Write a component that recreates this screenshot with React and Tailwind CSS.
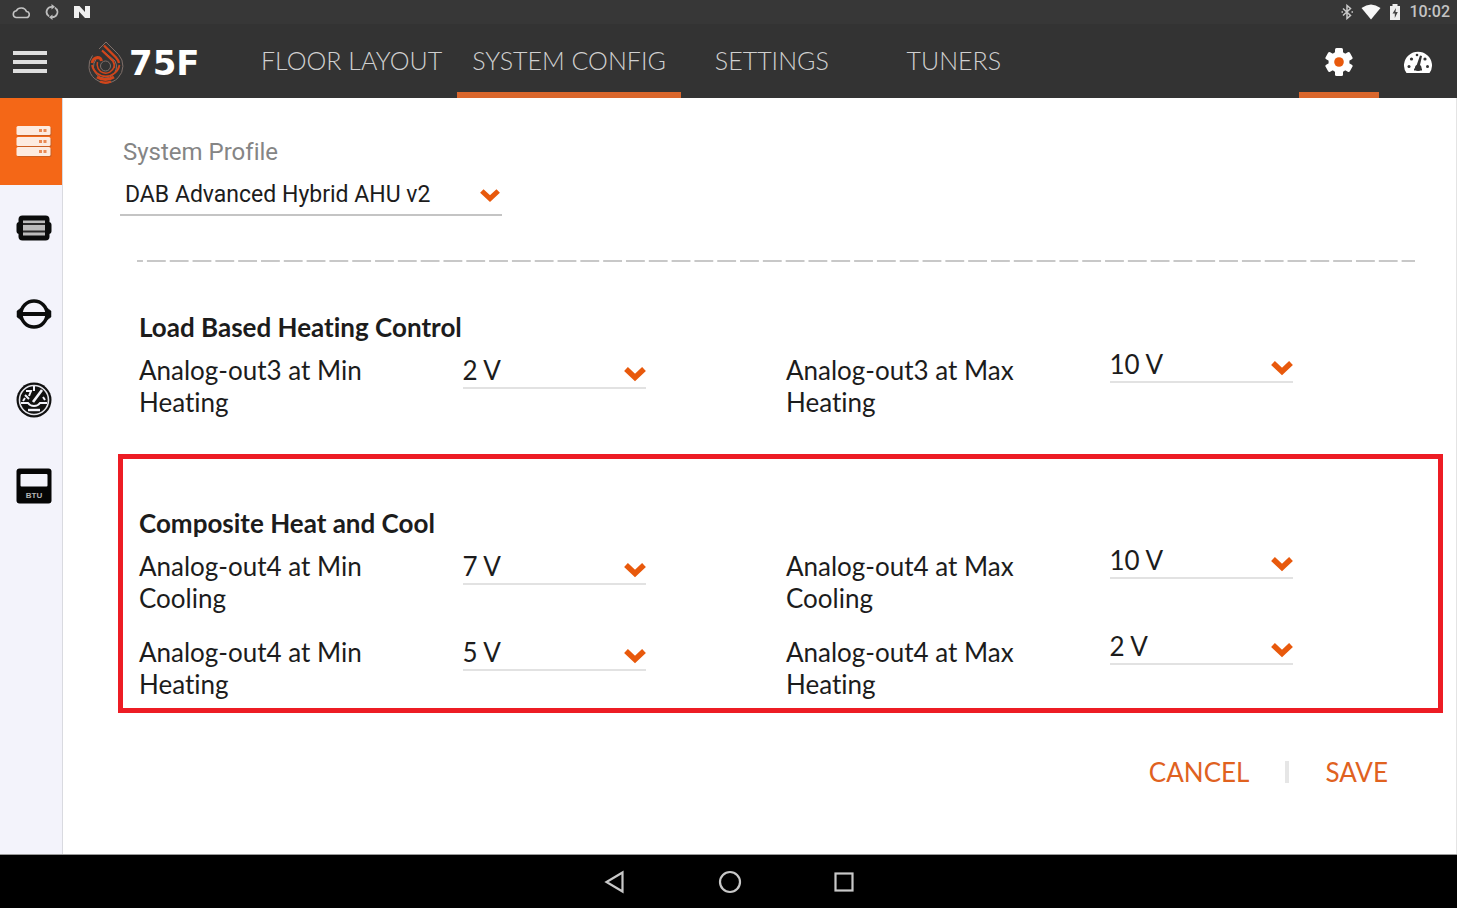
import React, { useState } from 'react';

const ORANGE = '#e8590c';

const tabs = ['FLOOR LAYOUT', 'SYSTEM CONFIG', 'SETTINGS', 'TUNERS'];

const profiles = ['DAB Advanced Hybrid AHU v2', 'DAB Staged RTU', 'VVT-C Staged RTU'];

const volts = ['0 V', '1 V', '2 V', '3 V', '4 V', '5 V', '6 V', '7 V', '8 V', '9 V', '10 V'];

const heatingRows = [
  [
    { id: 'ao3-min-heat', label: 'Analog-out3 at Min Heating', value: '2 V' },
    { id: 'ao3-max-heat', label: 'Analog-out3 at Max Heating', value: '10 V' },
  ],
];

const compositeRows = [
  [
    { id: 'ao4-min-cool', label: 'Analog-out4 at Min Cooling', value: '7 V' },
    { id: 'ao4-max-cool', label: 'Analog-out4 at Max Cooling', value: '10 V' },
  ],
  [
    { id: 'ao4-min-heat', label: 'Analog-out4 at Min Heating', value: '5 V' },
    { id: 'ao4-max-heat', label: 'Analog-out4 at Max Heating', value: '2 V' },
  ],
];

/* ---------- icons ---------- */

const Chevron = ({ className }) => (
  <svg viewBox="0 0 22 16" className={`absolute pointer-events-none ${className}`} fill="none" stroke={ORANGE} strokeWidth="5.500">
    <path d="M2 3 L11 11.500 L20 3" />
  </svg>
);

const DropLogo = () => (
  <svg viewBox="0 0 36 44" className="w-9 h-11" fill="none">
    <g stroke="#80706a" strokeWidth="1">
      <path d="M11 8 L18 1 L30.500 13.500 A17 17 0 1 1 4.500 14.500" />
      <path d="M14 9 L27 20 A11.500 11.500 0 1 1 8 18.500" />
      <circle cx="17.500" cy="25" r="5" />
    </g>
    <g stroke="#d2451a">
      <path d="M16 4.500 L28 16.500 A14 14 0 0 1 31 22" strokeWidth="2.400" />
      <path d="M14 9.500 L25 20 A9 9 0 0 1 26 27" strokeWidth="2" />
      <path d="M4 22 Q5 17 9.500 16.500 Q13 16.500 13.500 20" strokeWidth="2.800" />
      <path d="M4 24 A14 14 0 0 0 31.500 24" strokeWidth="1.800" />
      <path d="M9.500 21 A8.500 8.500 0 0 0 26 26" strokeWidth="1.500" />
      <path d="M9 36 Q17.500 41 26 36" strokeWidth="3" />
      <path d="M12 40.500 Q17.500 43 23 40.500" strokeWidth="2.400" />
    </g>
  </svg>
);

const GearIcon = () => (
  <svg viewBox="0 0 28 28" className="w-7 h-7">
    <g fill="#ffffff">
      <circle cx="14" cy="14" r="10.500" />
      {[0, 60, 120].map((deg) => (
        <rect key={deg} x="10" y="0" width="8" height="28" rx="1.500" transform={`rotate(${deg} 14 14)`} />
      ))}
    </g>
    <circle cx="14" cy="14" r="4.800" fill={ORANGE} />
  </svg>
);

const GaugeIcon = () => (
  <svg viewBox="0 0 28 24" className="w-7 h-6">
    <path d="M2.500 23 A14 13.500 0 1 1 25.500 23 Z" fill="#ffffff" />
    <g fill="#333333">
      <circle cx="5" cy="16.500" r="1.500" />
      <circle cx="7.500" cy="9" r="1.600" />
      <circle cx="13" cy="5" r="1.300" />
      <circle cx="21" cy="9" r="1.600" />
      <circle cx="23.500" cy="16.500" r="1.500" />
      <path d="M16 5.500 L18 6 L16 15 A3.300 3.300 0 1 1 12.800 14.800 Z" />
      <rect x="10" y="18.500" width="8" height="2" />
    </g>
  </svg>
);

const ServerIcon = () => (
  <svg viewBox="0 0 36 32" className="w-9 h-8">
    {[0, 11, 21].map((y) => (
      <g key={y}>
        <rect x="1.500" y={y + 1} width="34" height="9" rx="1.500" fill="#b05a2a" opacity="0.6" />
        <rect x="0.500" y={y} width="34" height="9" rx="1.500" fill="#fdebe0" />
        <rect x="23" y={y + 3} width="3" height="3" fill="#e98a55" />
        <rect x="27.500" y={y + 3} width="3" height="3" fill="#e98a55" />
      </g>
    ))}
  </svg>
);

const VentIcon = () => (
  <svg viewBox="0 0 36 26" className="w-9 h-[26px]">
    <rect x="0.500" y="7" width="35" height="12" rx="3" fill="#0b0c0c" />
    <rect x="2.500" y="0.500" width="31" height="25" rx="4" fill="#0b0c0c" />
    <rect x="7" y="5.500" width="22" height="15" fill="#bcbcbc" />
    <path d="M7 9 H29 M7 16.500 H29" stroke="#2a2a2a" strokeWidth="1.800" />
  </svg>
);

const DamperIcon = () => (
  <svg viewBox="0 0 36 30" className="w-9 h-[30px]" fill="none" stroke="#0b0c0c">
    <circle cx="18" cy="15" r="13" strokeWidth="3.400" />
    <path d="M2 15 H34" strokeWidth="4" />
    <path d="M1 12 L5 9 V21 L1 18 Z M35 12 L31 9 V21 L35 18 Z" fill="#0b0c0c" strokeWidth="0.500" />
  </svg>
);

const MeterIcon = () => (
  <svg viewBox="0 0 36 36" className="w-9 h-9" fill="none">
    <circle cx="18" cy="18" r="17.500" fill="#111111" />
    <circle cx="18" cy="18" r="14.500" stroke="#e4e4ea" strokeWidth="1.600" />
    <g stroke="#f3f3fb" strokeWidth="2">
      <path d="M5 21 H12 Q14 24 18 24 Q22 24 24 21 H31" />
      <path d="M17 20 L26 8" strokeWidth="2.600" />
      <path d="M18 4 V9 M9 13 L13 17 M7 19 L9 16 M27 15 L29 18 M10 9 L15 9 L13 14" />
      <path d="M12 28 H24" strokeWidth="2.400" />
    </g>
  </svg>
);

const BtuIcon = () => (
  <svg viewBox="0 0 36 36" className="w-9 h-9">
    <rect x="0.500" y="0.500" width="35" height="35" rx="3" fill="#050505" />
    <rect x="4.500" y="6" width="27" height="12.500" rx="1" fill="#f3f3fb" />
    <text x="18" y="30" textAnchor="middle" fontFamily="Liberation Sans, sans-serif" fontSize="8" fontWeight="bold" fill="#b5b5b5">
      BTU
    </text>
  </svg>
);

const modules = [
  { name: 'System', icon: ServerIcon },
  { name: 'Vent', icon: VentIcon },
  { name: 'Damper', icon: DamperIcon },
  { name: 'Meter', icon: MeterIcon },
  { name: 'BTU meter', icon: BtuIcon },
];

/* ---------- pieces ---------- */

function StatusBar() {
  return (
    <div className="flex-none h-6 bg-[#373737] flex items-center justify-between pl-3 pr-[7px]">
      <div className="flex items-center gap-[14px]">
        <svg viewBox="0 0 18 14" className="w-[18px] h-[14px]" fill="none" stroke="#c4c4c4" strokeWidth="1.600">
          <path d="M4 12.500 H14 A3 3 0 0 0 14.500 6.500 A5.500 5 0 0 0 4.300 5.800 A3.400 3.400 0 0 0 4 12.500 Z" />
        </svg>
        <svg viewBox="0 0 16 16" className="w-4 h-4" stroke="#bdbdbd" strokeWidth="1.700" fill="none">
          <path d="M8 2.800 A5.200 5.200 0 0 0 3.500 11 M8 13.200 A5.200 5.200 0 0 0 12.500 5" />
          <path d="M7.500 0 L11 2.800 L7.500 5.600 Z M8.500 10.400 L5 13.200 L8.500 16 Z" fill="#bdbdbd" stroke="none" />
          <path d="M11 3.500 L13 6 M5 12.500 L3 10" />
        </svg>
        <svg viewBox="0 0 16 14" className="w-4 h-[14px]" fill="#f0f0f0">
          <path d="M0 1 H5.500 L11 7 V1 H16 V13 H11 L5 6.500 V13 H0 Z" />
        </svg>
      </div>
      <div className="flex items-center gap-2">
        <svg viewBox="0 0 12 16" className="w-3 h-4" fill="none" stroke="#c9c9c9" strokeWidth="1.500">
          <path d="M2 4.500 L9.500 11.500 L6 14.500 V1.500 L9.500 4.500 L2 11.500 M0.500 8 H2 M10.500 8 H12" />
        </svg>
        <svg viewBox="0 0 20 16" className="w-5 h-4" fill="#f7f7f7">
          <path d="M0.500 4 Q10 -3 19.500 4 L10 15.500 Z" />
        </svg>
        <svg viewBox="0 0 12 18" className="w-3 h-[18px]">
          <path d="M1 3 H3.500 V1 H8.500 V3 H11 V17 H1 Z" fill="#eeeeee" />
          <path d="M7 5 L3.500 10.500 H5.800 V15 L8.800 9 H6.500 Z" fill="#444444" />
        </svg>
        <span className="font-[Roboto,sans-serif] text-base font-medium text-[#c4c4c4]">10:02</span>
      </div>
    </div>
  );
}

function Header({ activeTab, onChange }) {
  return (
    <header className="flex-none h-[74px] bg-[#333333] flex items-stretch">
      <button aria-label="Menu" className="flex flex-col justify-center gap-[5px] pt-0.5 pl-[13px] pr-10">
        <span className="w-[34px] h-[4px] bg-[#dedede]" />
        <span className="w-[34px] h-[4px] bg-[#dedede]" />
        <span className="w-[34px] h-[4px] bg-[#dedede]" />
      </button>
      <a href="#home" className="w-[159px] pt-1 pl-px flex items-center gap-[5px]">
        <DropLogo />
        <span className="font-['DejaVu_Sans',sans-serif] text-[34px] font-bold leading-9 text-white">75F</span>
      </a>

      <nav className="flex">
        {tabs.map((tab) => (
          <button
            key={tab}
            onClick={() => onChange(tab)}
            className={`min-w-[182px] px-[15px] pt-1.5 border-b-[6px] text-[25px] font-light whitespace-nowrap text-[#d0d0d0] ${
              activeTab === tab ? 'border-[#d9662c]' : 'border-transparent'
            }`}
          >
            {tab}
          </button>
        ))}
      </nav>

      <div className="ml-auto flex">
        <button aria-label="Configuration" className="w-20 pt-2 flex items-center justify-center border-b-[6px] border-[#d9662c]">
          <GearIcon />
        </button>
        <button aria-label="Dashboard" className="w-[78px] pt-2 flex items-center justify-center border-b-[6px] border-transparent">
          <GaugeIcon />
        </button>
      </div>
    </header>
  );
}

function Sidebar() {
  return (
    <aside className="flex-none w-[63px] bg-[#f3f3fb] border-r border-[#d9dae0]">
      {modules.map((item, i) => (
        <button
          key={item.name}
          aria-label={item.name}
          className={`w-full pl-[6px] flex items-center justify-center ${i === 0 ? 'h-[87px] bg-[#f46717]' : 'h-[86px]'}`}
        >
          <item.icon />
        </button>
      ))}
    </aside>
  );
}

function VoltField({ field, selectOffset }) {
  const [value, setValue] = useState(field.value);

  return (
    <>
      <label htmlFor={field.id} className="mt-1.5 pr-14 leading-8">{field.label}</label>
      <div className={`relative w-full max-w-[183px] ${selectOffset}`}>
        <select
          id={field.id}
          value={value}
          onChange={(e) => setValue(e.target.value)}
          className="block w-full h-[35px] pb-1 appearance-none bg-transparent border-b-2 border-[#e2e2e2] leading-8 outline-none"
        >
          {volts.map((v) => <option key={v}>{v}</option>)}
        </select>
        <Chevron className="right-0 top-3 w-[22px] h-4" />
      </div>
    </>
  );
}

function Section({ title, rows, className }) {
  return (
    <section className={`border-[5px] pl-4 pr-[5px] pb-2 ${className}`}>
      <h2 className="font-bold leading-8 mb-[5px]">{title}</h2>
      <div className="grid grid-cols-4 gap-y-4 items-start">
        {rows.map(([min, max]) => (
          <React.Fragment key={min.id}>
            <VoltField field={min} selectOffset="mt-1.5" />
            <VoltField field={max} selectOffset="mt-0" />
          </React.Fragment>
        ))}
      </div>
    </section>
  );
}

function App() {
  const [activeTab, setActiveTab] = useState('SYSTEM CONFIG');
  const [profile, setProfile] = useState(profiles[0]);

  return (
    <div className="min-h-screen bg-white pr-[5px] pb-[14px] flex flex-col font-[Lato,sans-serif] [font-variant-ligatures:no-common-ligatures]">
      <StatusBar />
      <Header activeTab={activeTab} onChange={setActiveTab} />

      <div className="flex-1 flex border-b border-[#9a9a9a]">
        <Sidebar />

        <main className="flex-1 min-w-0 pt-10 pl-[55px] pr-[13px] border-r border-[#e4e4e4] text-[26px] text-[#1c1c1c]">
          <div className="font-[Roboto,sans-serif] text-2xl">
            <label htmlFor="profile" className="block pl-[5px] leading-7 text-[#858585]">System Profile</label>
            <div className="relative mt-[10px] ml-[2px] w-[382px]">
              <select
                id="profile"
                value={profile}
                onChange={(e) => setProfile(e.target.value)}
                className="block w-full h-10 pl-[5px] appearance-none bg-transparent border-b-2 border-[#c4c4c4] text-[23px] outline-none"
              >
                {profiles.map((p) => <option key={p}>{p}</option>)}
              </select>
              <Chevron className="right-[2px] top-3 w-5 h-[15px]" />
            </div>
          </div>

          <hr className="mt-11 ml-[19px] mr-7 h-[2px] border-0 bg-[linear-gradient(90deg,#c8c8c8_25%,transparent_25%_45%,#c8c8c8_45%)] bg-[length:23px_2px] bg-repeat-round" />

          <Section title="Load Based Heating Control" rows={heatingRows} className="mt-8 pt-3 border-transparent" />
          <Section title="Composite Heat and Cool" rows={compositeRows} className="mt-[23px] pt-12 border-[#ed1c24]" />

          <div className="mt-[43px] pr-[55px] flex items-center justify-end text-[#e0621f]">
            <button className="leading-8">CANCEL</button>
            <span className="mx-9 w-1 h-[22px] bg-[#e6e6e6]" />
            <button className="leading-8">SAVE</button>
          </div>
        </main>
      </div>

      {/* Android navigation keys */}
      <footer className="flex-none h-[53px] bg-black flex items-center justify-center gap-[92px]">
        <button aria-label="Back">
          <svg viewBox="0 0 22 24" className="w-[22px] h-6" fill="none" stroke="#c8c8c8" strokeWidth="2.200">
            <path d="M18.500 2.500 V21.500 L2.500 12 Z" />
          </svg>
        </button>
        <button aria-label="Home">
          <svg viewBox="0 0 24 24" className="w-6 h-6" fill="none" stroke="#c8c8c8" strokeWidth="2.200">
            <circle cx="12" cy="12" r="10" />
          </svg>
        </button>
        <button aria-label="Recent apps">
          <svg viewBox="0 0 20 20" className="w-5 h-5" fill="none" stroke="#c8c8c8" strokeWidth="2.200">
            <rect x="1.500" y="1.500" width="17" height="17" />
          </svg>
        </button>
      </footer>
    </div>
  );
}

export default App;
